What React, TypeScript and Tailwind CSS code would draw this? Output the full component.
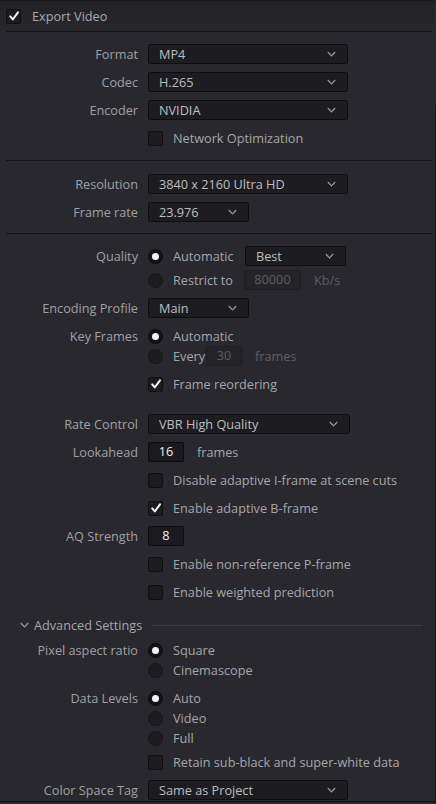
import React from 'react';

const Chevron = ({ className = '' }: { className?: string }) => (
  <svg width="9" height="6" viewBox="0 0 9 6" className={className}>
    <path d="M0.8 1 L4.5 4.8 L8.2 1" fill="none" stroke="#9a9aa0" strokeWidth="1.2" />
  </svg>
);

const Check = () => (
  <svg width="12" height="12" viewBox="0 0 12 12">
    <path d="M2.2 6.4 L4.8 9.4 L10 2.4" fill="none" stroke="#f2f2f2" strokeWidth="2" strokeLinecap="round" strokeLinejoin="round" />
  </svg>
);

function Checkbox({ checked = false }: { checked?: boolean }) {
  return (
    <div className="w-[15px] h-[15px] shrink-0 rounded-[2px] border border-[#0f0f12] bg-[#1c1c20] flex items-center justify-center">
      {checked && <Check />}
    </div>
  );
}

function Radio({ checked = false }: { checked?: boolean }) {
  return (
    <div className={`w-[15px] h-[15px] shrink-0 rounded-full border flex items-center justify-center ${checked ? 'border-[#0c0c0e] bg-[#141417]' : 'border-[#161619] bg-[#1d1d21]'}`}>
      {checked && <div className="w-[7px] h-[7px] rounded-full bg-[#f4f4f4]" />}
    </div>
  );
}

function Dropdown({ value, width }: { value: string; width: string }) {
  return (
    <div className={`${width} h-[20px] shrink-0 flex items-center justify-between pl-[10px] pr-[11px] rounded-[2px] border border-[#0e0e11] bg-[#1d1d21] text-[#bdbdc0]`}>
      <span className="leading-none pt-px">{value}</span>
      <Chevron />
    </div>
  );
}

function NumBox({ value, disabled = false, width }: { value: string; disabled?: boolean; width: string }) {
  return (
    <div className={`${width} h-[20px] shrink-0 flex items-center justify-center rounded-[2px] border ${disabled ? 'border-[#1f1f23] bg-[#252529] text-[#5c5c60]' : 'border-[#0c0c0e] bg-[#1b1b1f] text-[#f0f0f0]'}`}>
      {value}
    </div>
  );
}

function Row({ label = '', className = '', children }: { label?: string; className?: string; children: React.ReactNode }) {
  return (
    <div className={`flex h-[20px] items-center ${className}`}>
      <div className="w-[138px] shrink-0 pt-px text-right text-[#a0a0a4] whitespace-nowrap">{label}</div>
      <div className="ml-[10px] flex items-center text-[#a6a6aa] whitespace-nowrap">{children}</div>
    </div>
  );
}

function Option({ children, radio, checked = false, textWidth = '' }: { children: React.ReactNode; radio?: boolean; checked?: boolean; textWidth?: string }) {
  return (
    <>
      {radio ? <Radio checked={checked} /> : <Checkbox checked={checked} />}
      <span className={`ml-[10px] pt-px ${textWidth}`}>{children}</span>
    </>
  );
}

const Divider = () => <div className="h-px ml-[6px] mr-[3px] bg-[#141417]" />;

export default function App() {
  return (
    <div className="w-[436px] h-[804px] overflow-hidden flex bg-[#28282e] font-['Open_Sans',sans-serif] text-[12.7px]">
      <div className="flex-1 flex flex-col">
        {/* Header */}
        <div className="h-[31px] flex items-center pl-[6px] bg-gradient-to-b from-[#222226] to-[#27272c] border-t border-[#1a1a1d]">
          <Checkbox checked />
          <span className="ml-[11px] pt-px text-[#a9a9ad]">Export Video</span>
        </div>
        <Divider />

        {/* Format */}
        <div className="pt-[12px] pb-[12px] flex flex-col gap-[8px]">
          <Row label="Format"><Dropdown value="MP4" width="w-[200px]" /></Row>
          <Row label="Codec"><Dropdown value="H.265" width="w-[200px]" /></Row>
          <Row label="Encoder"><Dropdown value="NVIDIA" width="w-[200px]" /></Row>
          <Row><Option>Network Optimization</Option></Row>
        </div>
        <Divider />

        {/* Resolution */}
        <div className="pt-[13px] pb-[11px] flex flex-col gap-[8px]">
          <Row label="Resolution"><Dropdown value="3840 x 2160 Ultra HD" width="w-[200px]" /></Row>
          <Row label="Frame rate"><Dropdown value="23.976" width="w-[101px]" /></Row>
        </div>
        <Divider />

        {/* Quality & encoding */}
        <div className="pt-[12px] flex flex-col">
          <Row label="Quality">
            <Option radio checked textWidth="w-[72px]">Automatic</Option>
            <Dropdown value="Best" width="w-[101px]" />
          </Row>
          <Row className="mt-[4px]">
            <Option radio textWidth="w-[71px]">Restrict to</Option>
            <NumBox value="80000" disabled width="w-[57px]" />
            <span className="ml-[13px] pt-px text-[#5e5e62]">Kb/s</span>
          </Row>
          <Row label="Encoding Profile" className="mt-[8px]"><Dropdown value="Main" width="w-[101px]" /></Row>
          <Row label="Key Frames" className="mt-[8px]"><Option radio checked>Automatic</Option></Row>
          <Row>
            <Option radio textWidth="w-[33px]">Every</Option>
            <NumBox value="30" disabled width="w-[36px]" />
            <span className="ml-[13px] pt-px text-[#5e5e62]">frames</span>
          </Row>
          <Row className="mt-[8px]"><Option checked>Frame reordering</Option></Row>

          <Row label="Rate Control" className="mt-[20px]"><Dropdown value="VBR High Quality" width="w-[202px]" /></Row>
          <Row label="Lookahead" className="mt-[8px]">
            <NumBox value="16" width="w-[36px]" />
            <span className="ml-[13px] pt-px">frames</span>
          </Row>
          <Row className="mt-[8px]"><Option>Disable adaptive I-frame at scene cuts</Option></Row>
          <Row className="mt-[8px]"><Option checked>Enable adaptive B-frame</Option></Row>
          <Row label="AQ Strength" className="mt-[8px]"><NumBox value="8" width="w-[36px]" /></Row>
          <Row className="mt-[8px]"><Option>Enable non-reference P-frame</Option></Row>
          <Row className="mt-[8px]"><Option>Enable weighted prediction</Option></Row>

          {/* Advanced */}
          <div className="mt-[13px] h-[20px] flex items-center pl-[20px] pr-[13px]">
            <Chevron />
            <span className="ml-[5px] pt-px text-[#a6a6aa]">Advanced Settings</span>
            <div className="ml-[10px] flex-1 h-px bg-[#3b3b41]" />
          </div>
          <Row label="Pixel aspect ratio" className="mt-[5px]"><Option radio checked>Square</Option></Row>
          <Row><Option radio>Cinemascope</Option></Row>
          <Row label="Data Levels" className="mt-[8px]"><Option radio checked>Auto</Option></Row>
          <Row><Option radio>Video</Option></Row>
          <Row><Option radio>Full</Option></Row>
          <Row className="mt-[4px]"><Option>Retain sub-black and super-white data</Option></Row>
          <Row label="Color Space Tag" className="mt-[8px]"><Dropdown value="Same as Project" width="w-[200px]" /></Row>
        </div>
        <div className="mt-[1px] h-px bg-[#121214]" />
      </div>
      <div className="w-px mt-[105px] bg-[#151518]" />
    </div>
  );
}
